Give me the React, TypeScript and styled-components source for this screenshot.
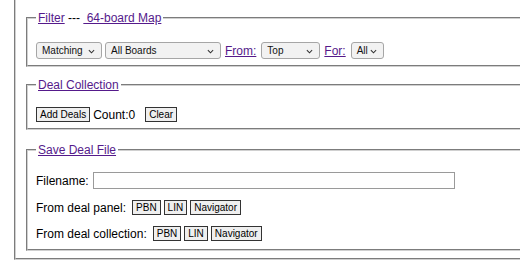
import React from 'react';
import styled, { createGlobalStyle } from 'styled-components';

const GlobalStyle = createGlobalStyle`
  body {
    margin: 0;
    overflow: hidden;
    background: #fff;
    font-family: "Liberation Sans", Arial, sans-serif;
    font-size: 12px;
    color: #000;
  }
`;

function Select({ label, width }: { label: string; width: number }) {
  return (
    <SelectBox $width={width}>
      <span>{label}</span>
      <Chevron viewBox="0 0 8 5" width="7" height="5">
        <path d="M1 1l3 3 3-3" fill="none" stroke="#333" strokeWidth="1.2" />
      </Chevron>
    </SelectBox>
  );
}

export default function App() {
  return (
    <>
      <GlobalStyle />
      <Page>
        <Outer>
          <Fieldset $pad="17px 8px 6px">
            <Legend>
              <Link href="#">Filter</Link> --- <Link href="#"> 64-board Map</Link>
            </Legend>
            <Row $gap={3}>
              <Select label="Matching" width={66} />
              <Select label="All Boards" width={116} />
              <RowLink href="#">From:</RowLink>
              <Select label="Top" width={59} />
              <RowLink href="#">For:</RowLink>
              <Select label="All" width={33} />
            </Row>
          </Fieldset>

          <Fieldset $pad="15px 8px 6px">
            <Legend>
              <Link href="#">Deal Collection</Link>
            </Legend>
            <Row $gap={3}>
              <Button>Add Deals</Button>
              <span>Count:0</span>
              <Button $left={7}>Clear</Button>
            </Row>
          </Fieldset>

          <Fieldset $pad="15px 8px 8px" $top={2}>
            <Legend>
              <Link href="#">Save Deal File</Link>
            </Legend>
            <Stack>
              <Row $gap={4}>
                <span>Filename:</span>
                <TextInput type="text" />
              </Row>
              <Row $gap={3}>
                <Label>From deal panel:</Label>
                <Button>PBN</Button>
                <Button>LIN</Button>
                <Button>Navigator</Button>
              </Row>
              <Row $gap={3}>
                <Label>From deal collection:</Label>
                <Button>PBN</Button>
                <Button>LIN</Button>
                <Button>Navigator</Button>
              </Row>
            </Stack>
          </Fieldset>
        </Outer>
      </Page>
    </>
  );
}

const Page = styled.div`
  padding-left: 14px;
`;

const Outer = styled.div`
  width: 560px;
  border: 2px groove #d0d0d0;
  border-top: none;
  padding: 11px 10px 7px 10px;
  display: flex;
  flex-direction: column;
  gap: 11px;
`;

const Fieldset = styled.fieldset<{ $pad: string; $top?: number }>`
  margin: ${(p) => p.$top ?? 0}px 0 0 0;
  border: 2px groove #d0d0d0;
  padding: ${(p) => p.$pad};
  min-width: 0;
`;

const Legend = styled.legend`
  padding: 0 2px;
  font-size: 12px;
  line-height: 14px;
`;

const Link = styled.a`
  color: #551a8b;
  text-decoration: underline;
  white-space: pre;
`;

const RowLink = styled(Link)`
  margin: 0 2px 0 1px;
`;

const Row = styled.div<{ $gap: number }>`
  display: flex;
  align-items: center;
  gap: ${(p) => p.$gap}px;
  line-height: 14px;
`;

const Stack = styled.div`
  display: flex;
  flex-direction: column;
  gap: 11px;
`;

const Label = styled.span`
  margin-right: 3px;
`;

const SelectBox = styled.div<{ $width: number }>`
  position: relative;
  box-sizing: border-box;
  width: ${(p) => p.$width}px;
  height: 17px;
  padding: 0 0 0 5px;
  display: flex;
  align-items: center;
  border: 1px solid #a6a6a6;
  border-radius: 3px;
  background: #f2f2f2;
  font-size: 10px;
  color: #111;
`;

const Chevron = styled.svg`
  position: absolute;
  right: 6px;
  top: 6px;
`;

const Button = styled.button<{ $left?: number }>`
  margin: 0 0 0 ${(p) => p.$left ?? 0}px;
  padding: 0 3px;
  height: 15px;
  border: 1px solid #333;
  border-radius: 0;
  background: #efefef;
  font-family: "Liberation Sans", Arial, sans-serif;
  font-size: 10px;
  line-height: 13px;
  color: #000;
`;

const TextInput = styled.input`
  box-sizing: border-box;
  width: 362px;
  height: 17px;
  margin: 0;
  padding: 0 3px;
  border: 1px solid #9a9a9a;
  border-radius: 0;
  font-family: "Liberation Sans", Arial, sans-serif;
  font-size: 12px;
`;
